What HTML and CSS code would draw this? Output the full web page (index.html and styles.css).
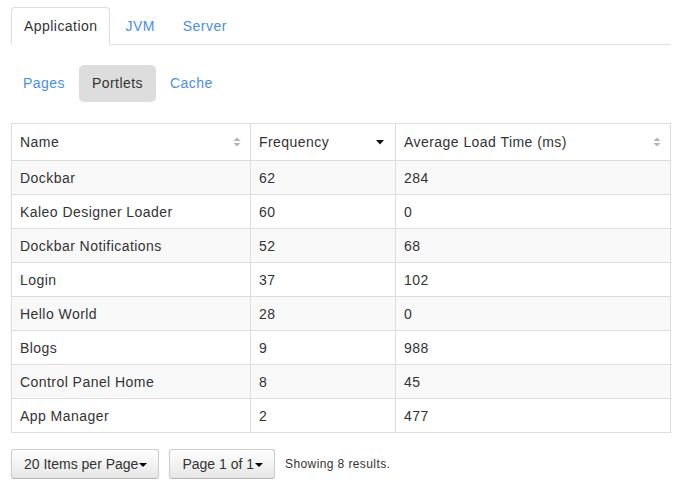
FILE: index.html
```html
<!DOCTYPE html>
<html>
<head>
<meta charset="utf-8">
<link rel="stylesheet" href="styles.css">
</head>
<body>
<div class="page">
  <ul class="tabs">
    <li class="tab active"><a>Application</a></li>
    <li class="tab"><a>JVM</a></li>
    <li class="tab"><a>Server</a></li>
  </ul>
  <ul class="pills">
    <li class="pill"><a>Pages</a></li>
    <li class="pill active"><a>Portlets</a></li>
    <li class="pill"><a>Cache</a></li>
  </ul>
  <table class="grid">
    <colgroup><col class="c1"><col class="c2"><col class="c3"></colgroup>
    <thead>
      <tr>
        <th><div class="th"><span>Name</span><svg class="sort" width="8" height="10" viewBox="0 0 8 10"><path d="M0.5 4 L4 0.5 L7.5 4 Z M0.5 6 L4 9.5 L7.5 6 Z" fill="#b4b4b4"/></svg></div></th>
        <th><div class="th"><span>Frequency</span><svg class="caret" width="8" height="5" viewBox="0 0 8 5"><path d="M0 0 L8 0 L4 4.5 Z" fill="#111"/></svg></div></th>
        <th><div class="th"><span>Average Load Time (ms)</span><svg class="sort" width="8" height="10" viewBox="0 0 8 10"><path d="M0.5 4 L4 0.5 L7.5 4 Z M0.5 6 L4 9.5 L7.5 6 Z" fill="#b4b4b4"/></svg></div></th>
      </tr>
    </thead>
    <tbody>
      <tr><td>Dockbar</td><td>62</td><td>284</td></tr>
      <tr><td>Kaleo Designer Loader</td><td>60</td><td>0</td></tr>
      <tr><td>Dockbar Notifications</td><td>52</td><td>68</td></tr>
      <tr><td>Login</td><td>37</td><td>102</td></tr>
      <tr><td>Hello World</td><td>28</td><td>0</td></tr>
      <tr><td>Blogs</td><td>9</td><td>988</td></tr>
      <tr><td>Control Panel Home</td><td>8</td><td>45</td></tr>
      <tr><td>App Manager</td><td>2</td><td>477</td></tr>
    </tbody>
  </table>
  <div class="pager">
    <button class="btn">20 Items per Page<span class="bcaret"></span></button>
    <button class="btn">Page 1 of 1<span class="bcaret"></span></button>
    <span class="results">Showing 8 results.</span>
  </div>
</div>
</body>
</html>
```
FILE: styles.css
```css
* { box-sizing: border-box; }
html, body { margin: 0; padding: 0; background: #fff; }
body {
  font-family: "Liberation Sans", Arial, sans-serif;
  font-size: 14px;
  line-height: 20px;
  letter-spacing: 0.45px;
  color: #333;
}
.page { padding: 7px 10px 0 11px; }
ul { list-style: none; margin: 0; padding: 0; }
a { color: #4a8fe3; cursor: pointer; }

.tabs {
  display: flex;
  border-bottom: 1px solid #ddd;
}
.tab { margin-right: 2px; margin-bottom: -1px; }
.tab a {
  display: block;
  padding: 8px 12px;
  border: 1px solid transparent;
  border-radius: 4px 4px 0 0;
}
.tab.active a {
  color: #333;
  background: #fff;
  border-color: #ddd #ddd transparent;
}

.pills {
  display: flex;
  margin-top: 20px;
}
.pill { margin-right: 1px; }
.pill a {
  display: block;
  padding: 8px 13px 8px 13px;
  line-height: 21px;
  border-radius: 5px;
}
.pill:first-child a { padding-left: 12px; }
.pill.active a { background: #ddd; color: #333; }

.grid {
  margin-top: 21px;
  width: 659px;
  border-collapse: collapse;
  table-layout: fixed;
  border: 1px solid #ddd;
}
.c1 { width: 239px; }
.c2 { width: 145px; }
.c3 { width: 275px; }
.grid th {
  font-weight: normal;
  text-align: left;
  padding: 8px 8px 8px 8px;
  border: 1px solid #ddd;
  background: #fff;
}
.th { display: flex; align-items: center; justify-content: space-between; }
.sort { margin-right: 1px; }
.caret { margin-right: 3px; margin-top: 1px; }
.grid td {
  padding: 7px 8px 6px 8px;
  border: 1px solid #ddd;
}
.grid tbody tr:nth-child(odd) td { background: #f9f9f9; }

.pager {
  display: flex;
  align-items: center;
  gap: 10px;
  margin-top: 16px;
}
.btn {
  font-family: inherit;
  font-size: 14px;
  line-height: 20px;
  letter-spacing: 0;
  color: #333;
  padding: 4px 11px 4px 12px;
  border: 1px solid #ccc;
  border-bottom-color: #b3b3b3;
  border-radius: 3px;
  background: linear-gradient(#fff, #e6e6e6);
  box-shadow: inset 0 1px 0 rgba(255,255,255,.2), 0 1px 2px rgba(0,0,0,.05);
  display: flex;
  align-items: center;
}
.bcaret {
  display: inline-block;
  width: 0; height: 0;
  border-left: 4px solid transparent;
  border-right: 4px solid transparent;
  border-top: 4px solid #000;
  margin-left: 1px;
  margin-top: 1px;
}
.results { font-size: 12px; letter-spacing: 0.4px; color: #333; }
```
